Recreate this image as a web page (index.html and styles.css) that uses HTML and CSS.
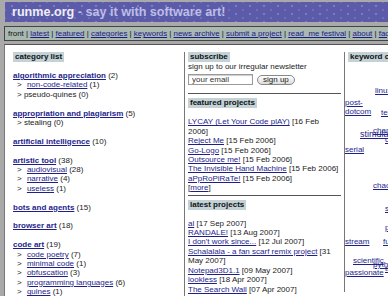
FILE: index.html
```html
<!DOCTYPE html>
<html lang="en">
<head>
    <meta charset="UTF-8">
    <meta name="viewport" content="width=device-width, initial-scale=1.0">
    <title>runme.org - say it with software art!</title>
    <link rel="stylesheet" href="styles.css">
</head>
<body>
    <div class="page">
        <div class="masthead"><span class="site">runme.org</span> - say it with software art!</div>

        <div class="nav">
            front | <a href="#">latest</a> | <a href="#">featured</a> | <a href="#">categories</a> | <a href="#">keywords</a> | <a href="#">news archive</a> | <a href="#">submit a project</a> | <a href="#">read_me festival</a> | <a href="#">about</a> | <a href="#">faq</a>
        </div>

        <div class="content">
            <!-- categories -->
            <div class="col col-cats">
                <h3 class="label">category list</h3>

                <div class="cat">
                    <a class="cat-name" href="#">algorithmic appreciation</a> (2)
                    <div class="sub">&gt; <a href="#">non-code-related</a> (1)</div>
                    <div class="sub">&gt; pseudo-quines (0)</div>
                </div>
                <div class="cat">
                    <a class="cat-name" href="#">appropriation and plagiarism</a> (5)
                    <div class="sub">&gt; stealing (0)</div>
                </div>
                <div class="cat">
                    <a class="cat-name" href="#">artificial intelligence</a> (10)
                </div>
                <div class="cat">
                    <a class="cat-name" href="#">artistic tool</a> (38)
                    <div class="sub">&gt; <a href="#">audiovisual</a> (28)</div>
                    <div class="sub">&gt; <a href="#">narrative</a> (4)</div>
                    <div class="sub">&gt; <a href="#">useless</a> (1)</div>
                </div>
                <div class="cat">
                    <a class="cat-name" href="#">bots and agents</a> (15)
                </div>
                <div class="cat">
                    <a class="cat-name" href="#">browser art</a> (18)
                </div>
                <div class="cat">
                    <a class="cat-name" href="#">code art</a> (19)
                    <div class="sub">&gt; <a href="#">code poetry</a> (7)</div>
                    <div class="sub">&gt; <a href="#">minimal code</a> (1)</div>
                    <div class="sub">&gt; <a href="#">obfuscation</a> (3)</div>
                    <div class="sub">&gt; <a href="#">programming languages</a> (6)</div>
                    <div class="sub">&gt; <a href="#">quines</a> (1)</div>
                </div>
            </div>

            <!-- subscribe / featured / latest -->
            <div class="col col-mid">
                <div class="box">
                    <h3 class="label label-tight">subscribe</h3>
                    <div>sign up to our irregular newsletter</div>
                    <form class="signup">
                        <input type="text" class="email" value="your email">
                        <button type="button">sign up</button>
                    </form>
                </div>

                <div class="box">
                    <h3 class="label">featured projects</h3>
                    <div><a href="#">LYCAY (Let Your Code plAY)</a> [16 Feb 2006]</div>
                    <div><a href="#">Reject Me</a> [15 Feb 2006]</div>
                    <div><a href="#">Go-Logo</a> [15 Feb 2006]</div>
                    <div><a href="#">Outsource me!</a> [15 Feb 2006]</div>
                    <div><a href="#">The Invisible Hand Machine</a> [15 Feb 2006]</div>
                    <div><a href="#">aPpRoPiRaTe!</a> [15 Feb 2006]</div>
                    <div>[<a href="#">more</a>]</div>
                </div>

                <div class="box box-last">
                    <h3 class="label">latest projects</h3>
                    <div><a href="#">al</a> [17 Sep 2007]</div>
                    <div><a href="#">RANDALE!</a> [13 Aug 2007]</div>
                    <div><a href="#">I don't work since...</a> [12 Jul 2007]</div>
                    <div><a href="#">Schalalala - a fan scarf remix project</a> [31 May 2007]</div>
                    <div><a href="#">Notepad3D1.1</a> [09 May 2007]</div>
                    <div><a href="#">lookless</a> [18 Apr 2007]</div>
                    <div><a href="#">The Search Wall</a> [07 Apr 2007]</div>
                    <div><a href="#">Breaking The News - Be a News-Jockey!</a> [02 Apr 2007]</div>
                </div>
            </div>

            <!-- keyword cloud -->
            <div class="col col-keys">
                <h3 class="label">keyword cloud</h3>
                <a class="kw" href="#" style="left:30px; top:34px">linux</a>
                <a class="kw kw-wrap" href="#" style="left:0; top:46px">post-dotcom</a>
                <a class="kw" href="#" style="left:36px; top:56px">technology</a>
                <a class="kw" href="#" style="left:28px; top:74px">chance</a>
                <a class="kw kw-big" href="#" style="left:15px; top:78px">stimulating</a>
                <a class="kw" href="#" style="left:40px; top:83px">collage</a>
                <a class="kw" href="#" style="left:0; top:93px">serial</a>
                <a class="kw" href="#" style="left:28px; top:129px">chaos</a>
                <a class="kw" href="#" style="left:40px; top:152px">sound</a>
                <a class="kw" href="#" style="left:40px; top:171px">poetry</a>
                <a class="kw" href="#" style="left:0; top:185px">stream</a>
                <a class="kw" href="#" style="left:38px; top:185px">fun</a>
                <a class="kw" href="#" style="left:8px; top:204px">scientific</a>
                <a class="kw" href="#" style="left:28px; top:208px">python</a>
                <a class="kw" href="#" style="left:40px; top:212px">time</a>
                <a class="kw" href="#" style="left:0; top:216px">passionate</a>
            </div>
        </div>
    </div>
</body>
</html>
```

FILE: styles.css
```css
html, body {
    overflow: hidden;
}
body {
    margin: 0;
    padding: 2px 0 0 4px;
    background-color: #a9a9a9;
    font-family: 'Liberation Sans', Arial, sans-serif;
    font-size: 8px;
    line-height: 9.4px;
    color: #222;
}
a {
    color: #1e1e8c;
}
.page {
    width: 520px;
}
.masthead {
    margin-left: 1px;
    height: 20px;
    line-height: 21px;
    padding-left: 7px;
    background-color: #5b5ba9;
    background-image:
        radial-gradient(circle, #7d7dc4 0.8px, transparent 1.4px),
        radial-gradient(circle, #6f6fba 0.8px, transparent 1.4px);
    background-size: 14px 8px, 14px 8px;
    background-position: 0 0, 7px 4px;
    font-size: 12.6px;
    font-weight: bold;
    color: #bdbde6;
}
.site {
    color: #eeeef8;
}
.nav {
    margin-top: 4px;
    height: 13px;
    line-height: 14px;
    padding-left: 3px;
    border: 1px solid #444;
    border-right: none;
    background-color: #a9b8b0;
    font-size: 7.9px;
    color: #111;
    white-space: nowrap;
}
.nav a {
    color: #1a1a88;
}
.content {
    margin-top: 3px;
    height: 260px;
    padding-top: 7px;
    border-top: 1px solid #555;
    border-left: 1px solid #777;
    background-color: #fff;
    display: grid;
    grid-template-columns: 179px 160px 160px;
    align-items: start;
}
.col {
    min-height: 240px;
}
.col-cats {
    padding-left: 8px;
}
.col-mid {
    padding: 0 3px;
    border-left: 1px solid #777;
}
.col-keys {
    position: relative;
    padding-left: 3px;
    border-left: 1px solid #777;
}
.label {
    display: inline-block;
    margin: 0 0 9px;
    padding: 0 2px;
    font-size: 8px;
    line-height: 10px;
    font-weight: bold;
    color: #111;
    background-color: #c2d2d6;
}
.label-tight {
    margin-bottom: 0;
}
.cat {
    margin-bottom: 9.4px;
}
.cat-name {
    font-weight: bold;
}
.sub {
    padding-left: 4px;
    color: #222;
}
.sub a {
    margin-left: 3px;
}
.box {
    padding-bottom: 2px;
    margin-bottom: 4px;
    border-bottom: 1px solid #555;
}
.box-last {
    border-bottom: none;
}
.signup {
    display: flex;
    align-items: center;
    gap: 4px;
    margin: 3px 0 6px;
}
.email {
    box-sizing: border-box;
    width: 65px;
    height: 11px;
    padding: 0 3px;
    border: 1px solid #999;
    box-shadow: inset 0 1px 1px rgba(0,0,0,0.2);
    font-family: inherit;
    font-size: 8px;
    color: #333;
}
.signup button {
    box-sizing: border-box;
    height: 10px;
    padding: 0 5px;
    border: 1px solid #888;
    border-radius: 6px;
    background: linear-gradient(#fff, #dcdcdc);
    font-family: inherit;
    font-size: 8px;
    line-height: 8px;
    color: #222;
}
.kw {
    position: absolute;
    white-space: nowrap;
}
.kw-wrap {
    white-space: normal;
    width: 28px;
}
.kw-big {
    font-size: 9px;
}
```
